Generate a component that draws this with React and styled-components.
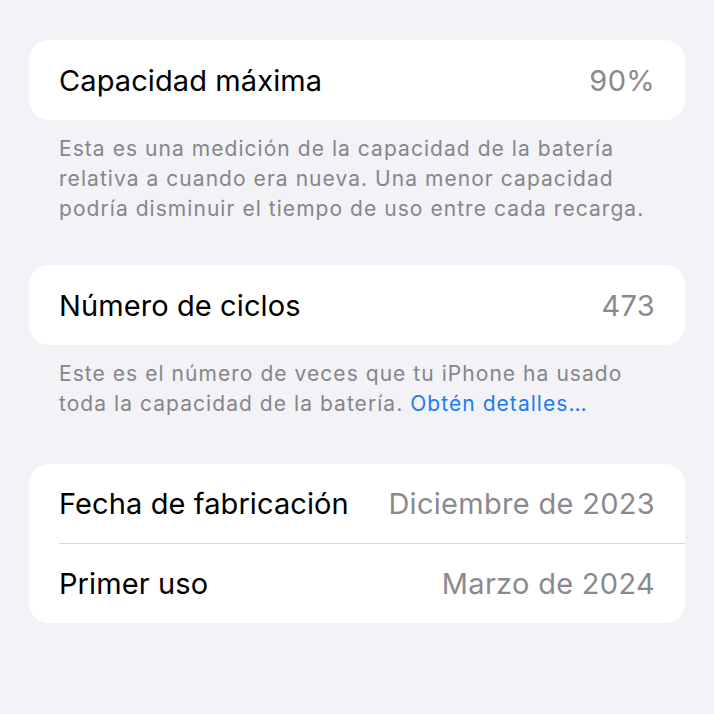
import React from 'react';
import styled, { createGlobalStyle } from 'styled-components';

const GlobalStyle = createGlobalStyle`
  html, body {
    margin: 0;
    padding: 0;
    background: #f2f2f7;
  }
  body {
    font-family: Inter, "Noto Sans", "Liberation Sans", sans-serif;
    -webkit-font-smoothing: antialiased;
  }
`;

const Page = styled.div`
  width: 714px;
  min-height: 714px;
  box-sizing: border-box;
  padding: 40px 29px 0;
  background: #f2f2f7;
`;

const Section = styled.section`
  margin-bottom: ${(p) => p.$gap}px;
`;

const Card = styled.div`
  background: #ffffff;
  border-radius: 20px;
  overflow: hidden;
`;

const Row = styled.div`
  box-sizing: border-box;
  height: ${(p) => p.$height || 80}px;
  display: flex;
  align-items: center;
  justify-content: space-between;
  padding: 0 30px;

  & + & {
    border-top: 1px solid #d9d9de;
    margin-left: 30px;
    padding-left: 0;
  }
`;

const Label = styled.span`
  font-size: 29px;
  color: #000000;
  letter-spacing: 0.1px;
`;

const Value = styled.span`
  font-size: 29px;
  color: #8a8a8e;
  letter-spacing: 0.3px;
`;

const Footer = styled.p`
  margin: 14px 0 0;
  padding: 0 30px;
  font-size: 21px;
  line-height: 30px;
  letter-spacing: 1.05px;
  color: #86868b;
  white-space: nowrap;
`;

const Link = styled.a`
  color: #1c7cf0;
  text-decoration: none;
`;

function InfoRow({ label, value, height }) {
  return (
    <Row $height={height}>
      <Label>{label}</Label>
      <Value>{value}</Value>
    </Row>
  );
}

export default function App() {
  return (
    <>
      <GlobalStyle />
      <Page>
        <Section $gap={41}>
          <Card>
            <InfoRow label="Capacidad máxima" value="90%" />
          </Card>
          <Footer>
            Esta es una medición de la capacidad de la batería
            <br />
            relativa a cuando era nueva. Una menor capacidad
            <br />
            podría disminuir el tiempo de uso entre cada recarga.
          </Footer>
        </Section>

        <Section $gap={45}>
          <Card>
            <InfoRow label="Número de ciclos" value="473" />
          </Card>
          <Footer>
            Este es el número de veces que tu iPhone ha usado
            <br />
            toda la capacidad de la batería. <Link href="#">Obtén detalles…</Link>
          </Footer>
        </Section>

        <Section $gap={0}>
          <Card>
            <InfoRow label="Fecha de fabricación" value="Diciembre de 2023" height={79} />
            <InfoRow label="Primer uso" value="Marzo de 2024" height={80} />
          </Card>
        </Section>
      </Page>
    </>
  );
}
